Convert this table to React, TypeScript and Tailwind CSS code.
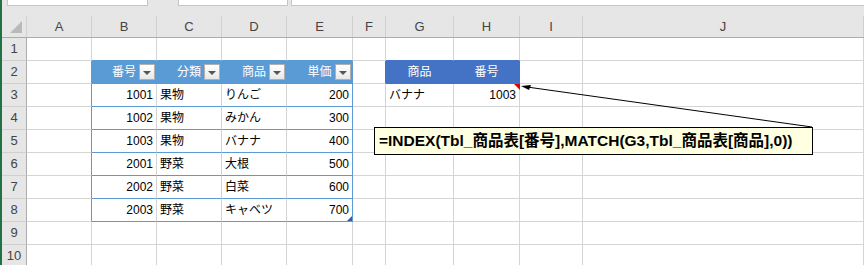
import React from "react";

type BK = "g" | "b" | "d";

type Cell = {
  t?: string;
  al?: "l" | "r" | "c";
  bg?: "b" | "d";
  rb?: BK;
  bb?: BK;
  f?: boolean;
  mark?: boolean;
  handle?: boolean;
};

const RB: Record<BK, string> = {
  g: "border-r-[#d4d4d4]",
  b: "border-r-[#5b9bd5]",
  d: "border-r-[#4472c4]",
};

const BB: Record<BK, string> = {
  g: "border-b-[#d4d4d4]",
  b: "border-b-[#5b9bd5]",
  d: "border-b-[#4472c4]",
};

const COLS = [
  { n: "A", w: "w-[65px]" },
  { n: "B", w: "w-[65px]" },
  { n: "C", w: "w-[65px]" },
  { n: "D", w: "w-[65px]" },
  { n: "E", w: "w-[66px]" },
  { n: "F", w: "w-[33px]" },
  { n: "G", w: "w-[68px]" },
  { n: "H", w: "w-[66px]" },
  { n: "I", w: "w-[63px]" },
  { n: "J", w: "flex-1" },
];

const HEAD = ["番号", "分類", "商品", "単価"];

const ITEMS = [
  ["1001", "果物", "りんご", "200"],
  ["1002", "果物", "みかん", "300"],
  ["1003", "果物", "バナナ", "400"],
  ["2001", "野菜", "大根", "500"],
  ["2002", "野菜", "白菜", "600"],
  ["2003", "野菜", "キャベツ", "700"],
];

function cellAt(r: number, c: number): Cell {
  if (r === 1) {
    if (c >= 1 && c <= 4) return { bb: "b" };
    if (c === 6 || c === 7) return { bb: "d" };
  }
  if (r === 2) {
    if (c === 0) return { rb: "b" };
    if (c >= 1 && c <= 4) return { t: HEAD[c - 1], al: "c", bg: "b", rb: "b", bb: "b", f: true };
    if (c === 5) return { rb: "d" };
    if (c === 6) return { t: "商品", al: "c", bg: "d", rb: "d", bb: "d" };
    if (c === 7) return { t: "番号", al: "c", bg: "d", rb: "d", bb: "d" };
  }
  if (r >= 3 && r <= 8) {
    const row = ITEMS[r - 3];
    if (c === 0) return { rb: "b" };
    if (c === 1) return { t: row[0], al: "r", bb: "b" };
    if (c === 2) return { t: row[1], al: "l", bb: "b" };
    if (c === 3) return { t: row[2], al: "l", bb: "b" };
    if (c === 4) return { t: row[3], al: "r", rb: "b", bb: "b", handle: r === 8 };
    if (r === 3 && c === 6) return { t: "バナナ", al: "l" };
    if (r === 3 && c === 7) return { t: "1003", al: "r", mark: true };
  }
  return {};
}

function FilterButton() {
  return (
    <div className="absolute right-[1px] top-[3px] flex h-[16px] w-[16px] items-end justify-center border border-[#b0b0b0] bg-gradient-to-b from-white to-[#e8e8e8] pb-[4px]">
      <svg width="8" height="4" viewBox="0 0 8 4">
        <polygon points="0,0 8,0 4,4" fill="#555" />
      </svg>
    </div>
  );
}

function GridCell({ cell, w }: { cell: Cell; w: string }) {
  const bg = cell.bg === "b" ? "bg-[#5b9bd5] text-white" : cell.bg === "d" ? "bg-[#4472c4] text-white" : "bg-white text-black";
  const al =
    cell.al === "r" ? "justify-end pr-[3px]" : cell.al === "c" ? "justify-center" : "justify-start pl-[3px]";
  return (
    <div
      className={`relative flex h-full shrink-0 items-center border-r border-b ${w} ${bg} ${al} ${RB[cell.rb ?? "g"]} ${BB[cell.bb ?? "g"]}`}
    >
      {cell.t && <span className="whitespace-nowrap leading-none">{cell.t}</span>}
      {cell.f && <FilterButton />}
      {cell.mark && (
        <svg className="absolute right-[-1px] top-0" width="6" height="6" viewBox="0 0 6 6">
          <polygon points="0,0 6,0 6,6" fill="#e00000" />
        </svg>
      )}
      {cell.handle && (
        <svg className="absolute bottom-0 right-0" width="5" height="5" viewBox="0 0 5 5">
          <polygon points="5,0 5,5 0,5" fill="#3a5ba0" />
        </svg>
      )}
    </div>
  );
}

export default function App() {
  const rows = [1, 2, 3, 4, 5, 6, 7, 8, 9, 10];
  return (
    <div className="relative flex h-[265px] w-[864px] overflow-hidden bg-white font-['Liberation_Sans','Noto_Sans_CJK_JP',sans-serif] text-[12px]">
      <div className="w-[2px] shrink-0 bg-[#217346]" />
      <div className="flex min-w-0 flex-1 flex-col">
        {/* formula bar remnant */}
        <div className="flex h-[16px] shrink-0 bg-[#e6e6e6]">
          <div className="ml-[5px] h-[6px] w-[141px] border-x border-b border-[#c6c6c6] bg-white" />
          <div className="ml-[30px] h-[6px] w-[110px] border-x border-b border-[#c6c6c6] bg-white" />
          <div className="ml-[3px] h-[6px] flex-1 border-l border-b border-[#c6c6c6] bg-white" />
        </div>

        {/* column headers */}
        <div className="flex h-[22px] shrink-0 border-b border-[#ababab] bg-[#e6e6e6] text-[13px] text-[#444]">
          <div className="relative w-[25px] shrink-0 border-r border-[#d0d0d0]">
            <svg className="absolute left-0 top-0" width="24" height="21" viewBox="0 0 24 21">
              <polygon points="20,5 20,17 8,17" fill="#b9b9b9" />
            </svg>
          </div>
          {COLS.map((col) => (
            <div
              key={col.n}
              className={`flex shrink-0 items-center justify-center border-r border-[#d0d0d0] ${col.w}`}
            >
              {col.n}
            </div>
          ))}
        </div>

        {/* rows */}
        {rows.map((r) => (
          <div key={r} className="flex h-[23px] shrink-0">
            <div className="flex w-[25px] shrink-0 items-center justify-center border-r border-b border-r-[#ababab] border-b-[#d0d0d0] bg-[#e6e6e6] text-[13px] text-[#444]">
              {r}
            </div>
            {COLS.map((col, c) => (
              <GridCell key={col.n} cell={cellAt(r, c)} w={col.w} />
            ))}
          </div>
        ))}
      </div>

      {/* comment arrow */}
      <svg className="pointer-events-none absolute left-0 top-0" width="864" height="265" viewBox="0 0 864 265">
        <line x1="812" y1="127" x2="527" y2="87" stroke="#000" strokeWidth="1" />
        <polygon points="521,86 531,85 529,90" fill="#000" />
      </svg>

      {/* formula text box */}
      <div className="absolute left-[374px] top-[127px] flex h-[28px] w-[439px] items-center border border-black bg-[#ffffe1] pl-[4px] text-[15.5px] font-bold text-black">
        =INDEX(Tbl_商品表[番号],MATCH(G3,Tbl_商品表[商品],0))
      </div>
    </div>
  );
}
